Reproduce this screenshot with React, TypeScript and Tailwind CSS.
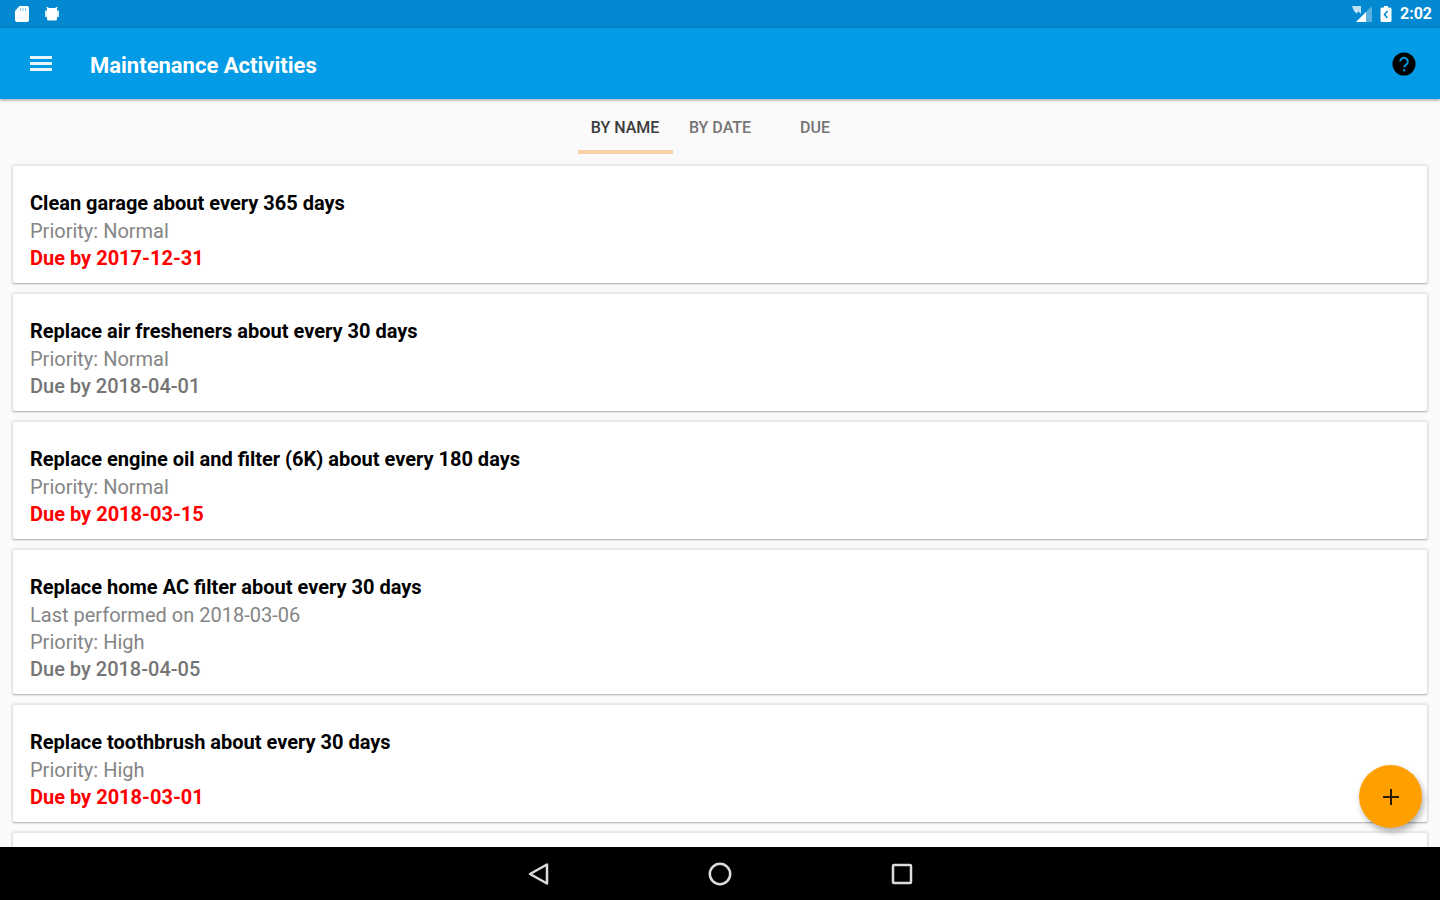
type Activity = {
  title: string;
  lastPerformed?: string;
  priority: "Normal" | "High";
  due: string;
  overdue?: boolean;
};

const activities: Activity[] = [
  { title: "Clean garage about every 365 days", priority: "Normal", due: "2017-12-31", overdue: true },
  { title: "Replace air fresheners about every 30 days", priority: "Normal", due: "2018-04-01" },
  { title: "Replace engine oil and filter (6K) about every 180 days", priority: "Normal", due: "2018-03-15", overdue: true },
  { title: "Replace home AC filter about every 30 days", lastPerformed: "2018-03-06", priority: "High", due: "2018-04-05" },
  { title: "Replace toothbrush about every 30 days", priority: "High", due: "2018-03-01", overdue: true },
];

const tabs = ["BY NAME", "BY DATE", "DUE"];

const cardStyle = "rounded-[2px] bg-white shadow-[0_0_1px_2px_rgba(0,0,0,0.07),0_1px_1px_rgba(0,0,0,0.2)]";

function StatusBar() {
  return (
    <div className="flex h-7 shrink-0 items-center bg-[#0288d1] pr-2 pl-3.5 text-white">
      <svg width="16" height="18" viewBox="0 0 16 18" fill="currentColor" aria-hidden>
        <path d="M5.5 1H13a2 2 0 0 1 2 2v12a2 2 0 0 1-2 2H3a2 2 0 0 1-2-2V6z" />
        <path d="M6.5 3v3M9 3v3M11.5 3v3" stroke="#7cc0e8" strokeWidth="1" />
      </svg>
      <svg className="ml-3.5" width="16" height="18" viewBox="0 0 16 18" fill="currentColor" aria-hidden>
        <path d="M3 4 2.5 1.5 5 3h6l2.5-1.5L13 4v10a1.5 1.5 0 0 1-1.5 1.5h-7A1.5 1.5 0 0 1 3 14z" />
        <path d="M1 5.5h14V12H1z" opacity="0.85" />
      </svg>
      <div className="ml-auto flex items-center">
        <svg width="20" height="18" viewBox="0 0 20 18" fill="currentColor" aria-hidden>
          <path d="M20 1v16H4z" opacity="0.35" />
          <path d="M14 7v10H4z" />
          <path d="M0 1h9v8L6.500 6.500 4.500 8.500 2 6z" opacity="0.75" />
        </svg>
        <svg className="ml-2" width="12" height="18" viewBox="0 0 12 18" aria-hidden>
          <path d="M4 1h4v1.5h2A1.5 1.5 0 0 1 11.5 4v11.5A1.5 1.5 0 0 1 10 17H2A1.5 1.5 0 0 1 .5 15.5V4A1.5 1.5 0 0 1 2 2.5h2z" fill="currentColor" />
          <path d="M7.5 6 4.5 9.5l3 3.5" fill="none" stroke="#0288d1" strokeWidth="1.6" />
        </svg>
        <span className="ml-2 text-base leading-7 font-bold">2:02</span>
      </div>
    </div>
  );
}

function AppBar() {
  return (
    <header className="z-10 flex h-[71px] shrink-0 items-center bg-[#039be5] px-6 shadow-[0_1px_3px_rgba(0,0,0,0.4)]">
      <button type="button" aria-label="Open menu" className="p-1.5 text-white">
        <svg width="22" height="18" viewBox="0 0 22 18" aria-hidden>
          <path d="M0 2.5h22M0 8.5h22M0 14.5h22" stroke="currentColor" strokeWidth="3" opacity="0.9" />
        </svg>
      </button>
      <h1 className="ml-8 pt-1 text-[22px] leading-8 font-bold text-white">Maintenance Activities</h1>
      <button type="button" aria-label="Help" className="ml-auto">
        <svg width="24" height="24" viewBox="0 0 24 24" aria-hidden>
          <circle cx="12" cy="12" r="11.5" />
          <path d="M8.2 9.5a3.8 3.8 0 1 1 6.3 2.9c-1.5 1.2-2.3 1.6-2.3 3.2" fill="none" stroke="#039be5" strokeWidth="2" />
          <path d="M11.1 17.2h2.2v2.2h-2.2z" fill="#039be5" />
        </svg>
      </button>
    </header>
  );
}

function TabBar() {
  return (
    <div role="tablist" className="flex h-[55px] shrink-0 justify-center">
      {tabs.map((tab, idx) => (
        <button
          key={tab}
          type="button"
          role="tab"
          aria-selected={idx === 0}
          className={`w-[95px] border-b-4 pt-1.5 text-base font-medium ${
            idx === 0 ? "border-[#f8cfa6] text-[#3c3c3c]" : "border-transparent text-[#757575]"
          }`}
        >
          {tab}
        </button>
      ))}
    </div>
  );
}

function ActivityCard({ activity }: { activity: Activity }) {
  return (
    <li className={`shrink-0 px-[17px] pt-6 pb-[11px] text-xl leading-[27px] text-[#858585] ${cardStyle}`}>
      <h2 className="mb-px font-bold text-black">{activity.title}</h2>
      {activity.lastPerformed && <p>Last performed on {activity.lastPerformed}</p>}
      <p>Priority: {activity.priority}</p>
      <p className={activity.overdue ? "font-bold text-[#ff0000]" : "font-medium text-[#757575]"}>Due by {activity.due}</p>
    </li>
  );
}

function NavigationBar() {
  return (
    <nav className="flex h-[53px] shrink-0 items-center justify-center gap-[158px] bg-black text-[#dcdcdc]">
      <button type="button" aria-label="Back">
        <svg width="24" height="24" viewBox="0 0 24 24" fill="none" stroke="currentColor" strokeWidth="2.5" strokeLinejoin="round" aria-hidden>
          <path d="M21 2.5v19L4 12z" />
        </svg>
      </button>
      <button type="button" aria-label="Home">
        <svg width="24" height="24" viewBox="0 0 24 24" fill="none" stroke="currentColor" strokeWidth="2.5" aria-hidden>
          <circle cx="12" cy="12" r="10.2" />
        </svg>
      </button>
      <button type="button" aria-label="Recent apps">
        <svg width="24" height="24" viewBox="0 0 24 24" fill="none" stroke="currentColor" strokeWidth="2.5" aria-hidden>
          <rect x="3" y="3" width="18" height="18" rx="1" />
        </svg>
      </button>
    </nav>
  );
}

export default function App() {
  return (
    <div className="flex h-screen flex-col overflow-hidden bg-[#fafafa] font-[Roboto,sans-serif]">
      <StatusBar />
      <AppBar />
      <TabBar />
      <main className="relative min-h-0 flex-1 overflow-hidden">
        <ul className="flex flex-col gap-[11px] px-[13px] pt-3">
          {activities.map((activity) => (
            <ActivityCard key={activity.title} activity={activity} />
          ))}
          <li className={`h-[117px] shrink-0 ${cardStyle}`} aria-hidden />
        </ul>
        <button
          type="button"
          aria-label="Add activity"
          className="absolute right-[18px] bottom-[19px] flex size-[63px] items-center justify-center rounded-full bg-[#ffa000] shadow-[2px_4px_6px_rgba(0,0,0,0.3)]"
        >
          <svg width="16" height="16" viewBox="0 0 16 16" aria-hidden>
            <path d="M8 0v16M0 8h16" stroke="#2b1c00" strokeWidth="2" />
          </svg>
        </button>
      </main>
      <NavigationBar />
    </div>
  );
}
